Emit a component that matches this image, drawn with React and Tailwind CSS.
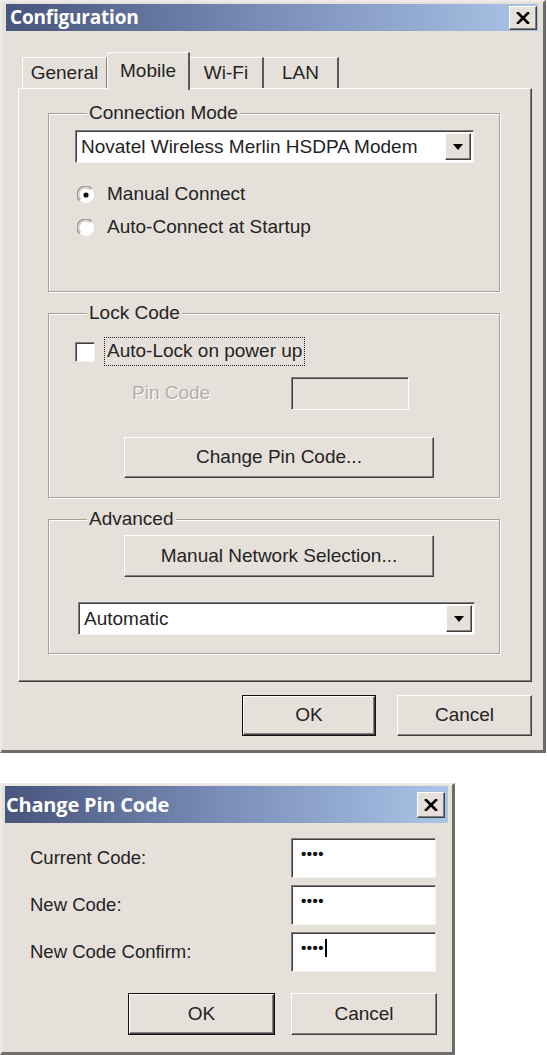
import React from "react";

function CloseBtn({ size = "w-[28px] h-[24px]" }) {
  return (
    <div
      className={`${size} bg-[#e5e0da] border border-t-white border-l-white border-r-[#404040] border-b-[#404040] shadow-[inset_-1px_-1px_0_#808080] flex items-center justify-center`}
    >
      <svg width="14" height="12" viewBox="0 0 14 12">
        <path d="M2 1 L12 11 M12 1 L2 11" stroke="#000" strokeWidth="2.6" strokeLinecap="square" />
      </svg>
    </div>
  );
}

function Radio({ checked }) {
  return (
    <svg width="18" height="18" viewBox="0 0 18 18" className="shrink-0">
      <circle cx="9" cy="9" r="8" fill="#fff" />
      <path d="M2.6 14.6 A8 8 0 0 1 14.6 2.6" fill="none" stroke="#9a9792" strokeWidth="1.4" />
      <path d="M3.8 13.4 A6.4 6.4 0 0 1 13.4 3.8" fill="none" stroke="#c9c5bf" strokeWidth="1.2" />
      {checked && <circle cx="9" cy="9" r="2.6" fill="#111" />}
    </svg>
  );
}

function Arrow() {
  return (
    <div className="w-[26px] self-stretch bg-[#e5e0da] border border-t-white border-l-white border-r-[#404040] border-b-[#404040] shadow-[inset_-1px_-1px_0_#808080] flex items-center justify-center">
      <svg width="10" height="6" viewBox="0 0 10 6">
        <path d="M0 0 H10 L5 6 Z" fill="#000" />
      </svg>
    </div>
  );
}

function Select({ text, className }) {
  return (
    <div
      className={`${className} bg-white border border-t-[#808080] border-l-[#808080] border-r-[#f4f2ef] border-b-[#f4f2ef] shadow-[inset_1px_1px_0_#404040] flex items-stretch pl-[5px] pr-[2px] py-[2px]`}
    >
      <div className="flex-1 flex items-center text-[19px] text-[#242424] leading-none">{text}</div>
      <Arrow />
    </div>
  );
}

function Button({ children, className, isDefault }) {
  if (isDefault) {
    return (
      <div className={`${className} border border-[#111] flex`}>
        <div className="flex-1 bg-[#e5e0da] border border-t-white border-l-white border-r-[#404040] border-b-[#404040] shadow-[inset_-1px_-1px_0_#808080] flex items-center justify-center text-[19px] text-[#242424]">
          {children}
        </div>
      </div>
    );
  }
  return (
    <div
      className={`${className} bg-[#e5e0da] border border-t-white border-l-white border-r-[#404040] border-b-[#404040] shadow-[inset_-1px_-1px_0_#808080] flex items-center justify-center text-[19px] text-[#242424]`}
    >
      {children}
    </div>
  );
}

function Group({ label, className, children }) {
  return (
    <fieldset
      className={`${className} border border-[#a4a09a] shadow-[inset_1px_1px_0_#fff,1px_1px_0_#fff] pl-[26px] pr-[24px]`}
    >
      <legend className="ml-[12px] px-[2px] bg-[#e5e0da] text-[19px] leading-[22px] text-[#242424]">{label}</legend>
      {children}
    </fieldset>
  );
}

function PwField({ cursor }) {
  return (
    <div className="w-[145px] h-[40px] bg-white border border-t-[#808080] border-l-[#808080] border-r-[#f4f2ef] border-b-[#f4f2ef] shadow-[inset_1px_1px_0_#404040] pl-[9px] pt-[7px] flex items-start">
      <span className="text-[15px] font-bold tracking-[0.5px] leading-[16px] text-[#111]">••••</span>
      {cursor && <span className="w-[1.5px] h-[18px] bg-black ml-[1px] mt-[-1px]" />}
    </div>
  );
}

export default function App() {
  return (
    <div className="w-[547px] h-[1055px] bg-white flex flex-col font-['Liberation_Sans',Arial,sans-serif]">
      {/* Dialog 1 */}
      <div className="w-[546px] h-[753px] bg-[#e5e0da] border-t-[2px] border-l-[2px] border-t-[#eeebe7] border-l-[#eeebe7] border-r-[3px] border-b-[3px] border-r-[#6f6d69] border-b-[#6f6d69] pt-[2px] pl-[4px] pr-[5px] flex flex-col">
        <div className="h-[27px] bg-gradient-to-r from-[#48557d] via-[#7b8fb8] to-[#aac4e6] flex items-center justify-between pl-[4px] pr-[1px]">
          <span className="text-white font-bold text-[19px] font-['Open_Sans',sans-serif] leading-none tracking-[-0.2px]">
            Configuration
          </span>
          <CloseBtn />
        </div>

        <div className="ml-[12px] mt-[21px] flex flex-col">
          {/* tabs */}
          <div className="h-[36px] flex items-end pl-[4px] relative z-10">
            <div className="w-[85px] h-[31px] border-t border-l border-t-white border-l-white border-r border-r-[#808080] rounded-tl-[3px] flex items-center justify-center text-[19px] text-[#242424]">
              General
            </div>
            <div className="w-[83px] h-[38px] mb-[-2px] bg-[#e5e0da] border-t border-l border-t-white border-l-white border-r-2 border-r-[#5a5855] rounded-tl-[3px] flex items-start pt-[4px] justify-center text-[19px] text-[#242424]">
              Mobile
            </div>
            <div className="w-[74px] h-[31px] border-t border-t-white border-r-2 border-r-[#5a5855] flex items-center justify-center text-[19px] text-[#242424]">
              Wi-Fi
            </div>
            <div className="w-[75px] h-[31px] border-t border-t-white border-r-2 border-r-[#5a5855] flex items-center justify-center text-[19px] text-[#242424]">
              LAN
            </div>
          </div>

          {/* panel */}
          <div className="w-[514px] h-[594px] border border-t-white border-l-white border-r-[#404040] border-b-[#404040] shadow-[inset_-1px_-1px_0_#808080] pl-[29px] pt-[13px] flex flex-col gap-[10px]">
            <Group label="Connection Mode" className="w-[452px] h-[190px]">
              <Select text="Novatel Wireless Merlin HSDPA Modem" className="w-[399px] h-[33px] mt-[6px]" />
              <div className="mt-[15px] h-[33px] flex items-center gap-[12px] pl-[2px] text-[19px] text-[#242424]">
                <Radio checked />
                <span>Manual Connect</span>
              </div>
              <div className="h-[33px] flex items-center gap-[12px] pl-[2px] text-[19px] text-[#242424]">
                <Radio />
                <span>Auto-Connect at Startup</span>
              </div>
            </Group>

            <Group label="Lock Code" className="w-[452px] h-[196px]">
              <div className="mt-[13px] h-[29px] flex items-center">
                <div className="w-[20px] h-[20px] bg-white border border-t-[#808080] border-l-[#808080] border-r-[#f4f2ef] border-b-[#f4f2ef] shadow-[inset_1px_1px_0_#404040]" />
                <div className="ml-[9px] h-[29px] border border-dotted border-[#222] px-[2px] flex items-center text-[19px] text-[#242424]">
                  Auto-Lock on power up
                </div>
              </div>
              <div className="mt-[11px] h-[33px] flex items-center">
                <span className="ml-[57px] w-[159px] text-[19px] text-[#b3aea6] [text-shadow:1px_1px_0_#fff]">Pin Code</span>
                <div className="w-[118px] h-[33px] bg-[#e5e0da] border border-t-[#808080] border-l-[#808080] border-r-white border-b-white shadow-[inset_1px_1px_0_#404040]" />
              </div>
              <Button className="mt-[27px] ml-[49px] w-[310px] h-[41px]">Change Pin Code...</Button>
            </Group>

            <Group label="Advanced" className="w-[452px] h-[146px]">
              <Button className="mt-[5px] ml-[49px] w-[310px] h-[42px]">Manual Network Selection...</Button>
              <Select text="Automatic" className="mt-[25px] ml-[3px] w-[397px] h-[33px]" />
            </Group>
          </div>

          {/* buttons */}
          <div className="w-[514px] mt-[13px] flex justify-end gap-[21px]">
            <Button isDefault className="w-[134px] h-[41px]">OK</Button>
            <Button className="w-[135px] h-[41px]">Cancel</Button>
          </div>
        </div>
      </div>

      {/* Dialog 2 */}
      <div className="mt-[30px] w-[455px] h-[272px] bg-[#e5e0da] border-t-[2px] border-l-[2px] border-t-[#eeebe7] border-l-[#eeebe7] border-r-[3px] border-b-[3px] border-r-[#6f6d69] border-b-[#6f6d69] pt-[1px] pl-[3px] pr-[4px] flex flex-col">
        <div className="h-[37px] bg-gradient-to-r from-[#48557d] via-[#7b8fb8] to-[#aac4e6] flex items-center justify-between pl-[1px] pr-[3px]">
          <span className="text-white font-bold text-[20px] font-['Open_Sans',sans-serif] leading-none tracking-[-0.2px]">
            Change Pin Code
          </span>
          <CloseBtn size="w-[28px] h-[26px]" />
        </div>
        <div className="mt-[15px] pl-[25px] flex flex-col gap-[7px] text-[18.5px] text-[#242424]">
          <div className="flex items-center">
            <span className="w-[261px]">Current Code:</span>
            <PwField />
          </div>
          <div className="flex items-center">
            <span className="w-[261px]">New Code:</span>
            <PwField />
          </div>
          <div className="flex items-center">
            <span className="w-[261px]">New Code Confirm:</span>
            <PwField cursor />
          </div>
          <div className="mt-[14px] flex gap-[16px] pl-[98px]">
            <Button isDefault className="w-[147px] h-[42px]">OK</Button>
            <Button className="w-[146px] h-[42px]">Cancel</Button>
          </div>
        </div>
      </div>
    </div>
  );
}
